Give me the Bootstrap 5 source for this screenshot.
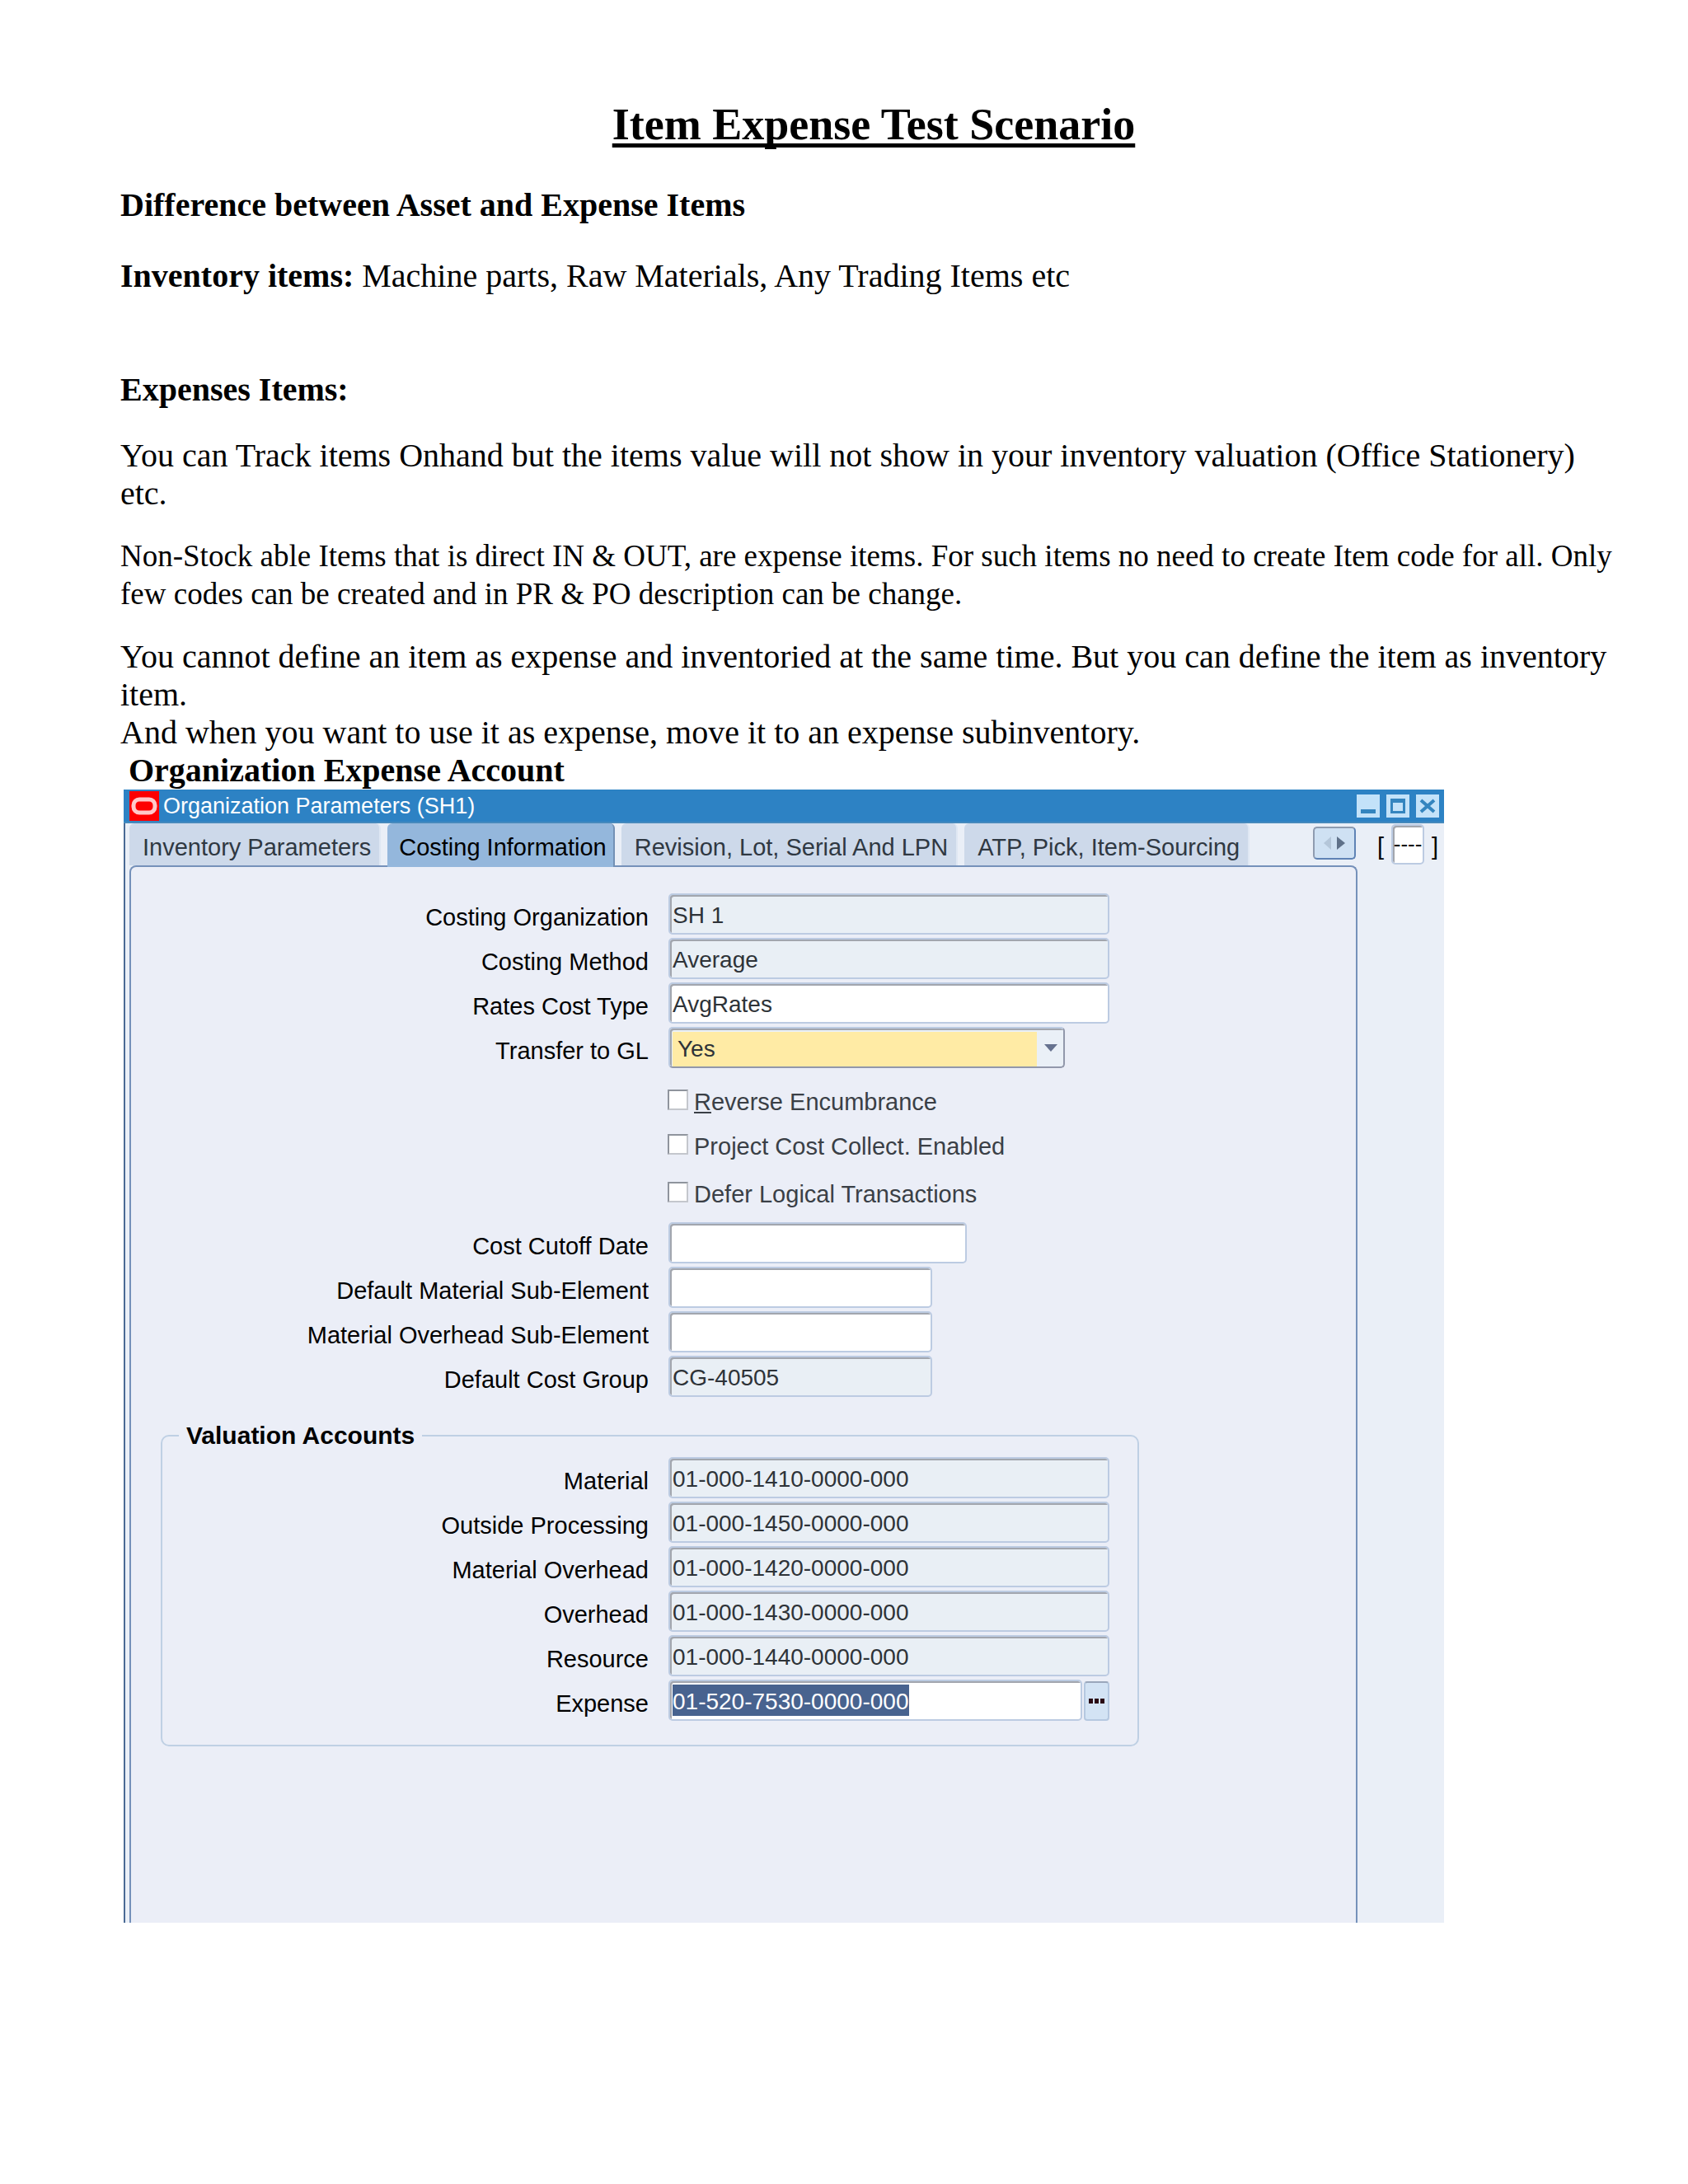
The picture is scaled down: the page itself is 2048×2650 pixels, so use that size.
<!DOCTYPE html>
<html lang="en">
<head>
<meta charset="utf-8">
<meta name="viewport" content="width=device-width, initial-scale=1">
<title>Item Expense Test Scenario</title>
<link href="https://cdn.jsdelivr.net/npm/bootstrap@5.3.0/dist/css/bootstrap.min.css" rel="stylesheet">
<style>
  body { background: #fff; color: #000; }
  .doc { font-family: "Liberation Serif", "Times New Roman", serif; font-size: 40px; line-height: 46px; padding: 121px 74px 120px 146px; }
  .doc p, .doc h2, .doc h3 { font-size: 40px; line-height: 46px; margin: 0; }
  .doc h2, .doc h3 { font-weight: 700; }
  .doc h1 { font-size: 54px; line-height: 60px; font-weight: 700; margin: 0 0 45px; text-decoration: underline; text-decoration-thickness: 5px; text-underline-offset: 5px; text-decoration-skip-ink: none; }
  .doc p.compact { font-size: 37px; }
  .doc h2.sub { margin-bottom: 40px; }
  .doc .gap-lg { margin-bottom: 92px; }
  .doc .gap-md { margin-bottom: 34px; }
  .doc .gap-sm { margin-bottom: 30px; }
  .doc h3.caption { padding-left: 10px; }

  .appwin { max-width: 1602px; margin-left: 4px; background: #eaeff7; font-family: "Liberation Sans", Arial, sans-serif; font-size: 29px; line-height: 34px; border-left: 2px solid #4a6a94; }
  .titlebar { background: #2d82c4; height: 41px; padding: 0 6px 0 7px; margin-left: -2px; border-bottom: 2px solid #4589bd; color: #fff; font-size: 27px; gap: 5px; }
  .titlebar .logo { width: 36px; height: 36px; flex: none; }
  .winbtns { gap: 8px; }
  .winbtns button { width: 28px; height: 28px; padding: 0; border: 0; background: none; display: block; }
  .winbtns svg { display: block; }
  .left-col { width: 1495px; min-width: 0; padding-left: 5px; }
  .tabstrip { height: 51px; gap: 8px; padding-right: 2px; }
  .tabstrip .tab { border: 0; border-radius: 6px 6px 0 0; height: 51px; padding: 6px 10px 0 16px; background: #cdd9ea; color: #2f3842; white-space: nowrap; border-right: 2px solid #dfe7f3; }
  .tabstrip .tab.active { background: #94b7dc; color: #000; border-right: 2px solid #7391b5; height: 53px; padding: 4px 8px 0 14px; }
  .scroller { width: 52px; height: 40px; margin-top: 4px; border: 2px solid #8f9cb0; border-right-color: #5f83b5; border-bottom-color: #5f83b5; border-radius: 5px; background: #cfe1f3; padding: 0; }
  .panel { border: 2px solid #7591ba; border-bottom: 0; border-radius: 8px 8px 0 0; background: #ebeef7; padding: 32px 0 214px; --lab: 628px; }
  .frow { display: flex; gap: 24px; height: 50px; margin-bottom: 4px; }
  .frow > label { width: var(--lab); text-align: right; padding-top: 12px; white-space: nowrap; color: #000; }
  .fld { height: 50px; border: 2px solid #bccbe2; border-radius: 5px; background: #fff; box-shadow: inset 2px 2px 0 #a2a6ae; padding: 4px 3px 0 3px; font-size: 28px; color: #2e3338; outline: 0; min-width: 0; }
  .fld[readonly] { background: #e9eff5; }
  .w-full { width: 535px; }
  .w-date { width: 362px; }
  .w-mid { width: 320px; }
  .pick { position: relative; width: 481px; }
  .pick select { appearance: none; width: 100%; padding-left: 9px; border-right-color: #9298ab; border-bottom-color: #9298ab; background: linear-gradient(#ffeba5, #ffeba5) 3px 4px / 442px 42px no-repeat #eaf0f7; }
  .pick svg { position: absolute; right: 8px; top: 20px; pointer-events: none; }
  .checks { padding: 7px 0 10px; }
  .chk { display: flex; align-items: center; gap: 7px; height: 54px; margin-left: 651px; color: #3a3f46; font-size: 29px; }
  .chk input { appearance: none; width: 25px; height: 25px; margin: 0; background: #fff; border: 2px solid #8f949d; border-right-color: #c4c7cd; border-bottom-color: #c4c7cd; flex: none; }
  .chk label { padding-top: 6px; }
  .chk.last { margin-top: 4px; }
  .valbox { --lab: 590px; border: 2px solid #bfd0e4; border-radius: 10px; max-width: 1187px; margin: 30px 0 0 36px; padding: 9px 0 25px; }
  .valbox legend { float: none; width: auto; margin: 0 0 0 20px; padding: 0 9px; font-size: 30px; line-height: 34px; font-weight: 700; color: #000; }
  .picker { gap: 2px; }
  .picker .fld { width: 502px; }
  .fld.selected { color: #fff; background: linear-gradient(#48638f, #48638f) 3px 4px / 287px 38px no-repeat #fff; }
  .lov { width: 31px; height: 48px; margin-top: 2px; border: 2px solid #b5c8e0; border-top-color: #9aa7bb; border-radius: 4px; background: #d3e3f4; padding: 0; display: flex; align-items: center; justify-content: center; }
  .flex-box { padding: 1px 0 0 24px; color: #000; font-size: 29px; }
  .flex-box .fld { width: 40px; height: 49px; padding: 0; text-align: center; margin: 0 9px; color: #000; font-size: 26px; }
  .flex-box span { padding-top: 4px; }
</style>
<script src="https://cdn.jsdelivr.net/npm/bootstrap@5.3.0/dist/js/bootstrap.bundle.min.js"></script>
</head>
<body>
<main class="doc container-fluid">
  <h1 class="text-center">Item Expense Test Scenario</h1>
  <h2 class="sub">Difference between Asset and Expense Items</h2>
  <p class="gap-lg"><strong>Inventory items:</strong> Machine parts, Raw Materials, Any Trading Items etc</p>
  <h2 class="gap-md">Expenses Items:</h2>
  <p class="gap-sm">You can Track items Onhand but the items value will not show in your inventory valuation (Office Stationery)<br>etc.</p>
  <p class="compact gap-sm">Non-Stock able Items that is direct IN &amp; OUT, are expense items. For such items no need to create Item code for all. Only<br>few codes can be created and in PR &amp; PO description can be change.</p>
  <p>You cannot define an item as expense and inventoried at the same time. But you can define the item as inventory<br>item.</p>
  <p>And when you want to use it as expense, move it to an expense subinventory.</p>
  <h3 class="caption">Organization Expense Account</h3>

  <section class="appwin">
    <div class="titlebar d-flex align-items-center">
      <svg class="logo" viewBox="0 0 36 36" aria-hidden="true"><rect width="36" height="36" fill="#fe0000"/><rect x="5" y="10" width="26" height="16" rx="7" fill="none" stroke="#ffc9c9" stroke-width="5"/></svg>
      <span>Organization Parameters (SH1)</span>
      <div class="winbtns d-flex ms-auto">
        <button type="button" aria-label="Minimize"><svg width="28" height="28"><rect width="28" height="28" fill="#c3e2f9"/><rect x="5" y="18" width="18" height="5" fill="#3485bf"/></svg></button>
        <button type="button" aria-label="Maximize"><svg width="28" height="28"><rect width="28" height="28" fill="#c3e2f9"/><path d="M5 5h18v18H5zM8 10v10h12V10z" fill="#3485bf" fill-rule="evenodd"/></svg></button>
        <button type="button" aria-label="Close"><svg width="28" height="28"><rect width="28" height="28" fill="#c3e2f9"/><path d="M6 7l16 14M22 7L6 21" stroke="#3485bf" stroke-width="4"/></svg></button>
      </div>
    </div>
    <div class="d-flex align-items-start">
      <div class="left-col">
        <div class="tabstrip d-flex align-items-start" role="tablist">
          <button type="button" class="tab" role="tab">Inventory Parameters</button>
          <button type="button" class="tab active" role="tab" aria-selected="true">Costing Information</button>
          <button type="button" class="tab" role="tab">Revision, Lot, Serial And LPN</button>
          <button type="button" class="tab" role="tab">ATP, Pick, Item-Sourcing</button>
          <button type="button" class="scroller ms-auto" aria-label="Scroll tabs"><svg width="30" height="20" viewBox="0 0 30 20" class="d-block mx-auto"><path d="M11 2v16L2 10z" fill="#b4c6d9"/><path d="M18 2v16l10-8z" fill="#5f7189"/></svg></button>
        </div>
        <form class="panel">
          <div class="frow"><label for="org">Costing Organization</label><input id="org" class="fld w-full" value="SH 1" readonly></div>
          <div class="frow"><label for="method">Costing Method</label><input id="method" class="fld w-full" value="Average" readonly></div>
          <div class="frow"><label for="rates">Rates Cost Type</label><input id="rates" class="fld w-full" value="AvgRates"></div>
          <div class="frow"><label for="gl">Transfer to GL</label>
            <div class="pick"><select id="gl" class="fld"><option>Yes</option><option>No</option></select><svg width="18" height="11" aria-hidden="true"><path d="M1 1h16l-8 9z" fill="#66728f"/></svg></div>
          </div>
          <div class="checks">
            <div class="chk"><input type="checkbox" id="rev"><label for="rev"><u>R</u>everse Encumbrance</label></div>
            <div class="chk"><input type="checkbox" id="proj"><label for="proj">Project Cost Collect. Enabled</label></div>
            <div class="chk last"><input type="checkbox" id="defer"><label for="defer">Defer Lo<u>g</u>ical Transactions</label></div>
          </div>
          <div class="frow"><label for="cutoff">Cost Cutoff Date</label><input id="cutoff" class="fld w-date"></div>
          <div class="frow"><label for="dmse">Default Material Sub-Element</label><input id="dmse" class="fld w-mid"></div>
          <div class="frow"><label for="mose">Material Overhead Sub-Element</label><input id="mose" class="fld w-mid"></div>
          <div class="frow"><label for="dcg">Default Cost Group</label><input id="dcg" class="fld w-mid" value="CG-40505" readonly></div>
          <fieldset class="valbox">
            <legend>Valuation Accounts</legend>
            <div class="frow"><label for="a1">Material</label><input id="a1" class="fld w-full" value="01-000-1410-0000-000" readonly></div>
            <div class="frow"><label for="a2">Outside Processing</label><input id="a2" class="fld w-full" value="01-000-1450-0000-000" readonly></div>
            <div class="frow"><label for="a3">Material Overhead</label><input id="a3" class="fld w-full" value="01-000-1420-0000-000" readonly></div>
            <div class="frow"><label for="a4">Overhead</label><input id="a4" class="fld w-full" value="01-000-1430-0000-000" readonly></div>
            <div class="frow"><label for="a5">Resource</label><input id="a5" class="fld w-full" value="01-000-1440-0000-000" readonly></div>
            <div class="frow"><label for="a6">Expense</label>
              <div class="picker d-flex"><input id="a6" class="fld selected" value="01-520-7530-0000-000"><button type="button" class="lov" aria-label="List of values"><svg width="19" height="6"><path d="M0 0h5v6H0zM7 0h5v6H7zM14 0h5v6h-5z" fill="#2a0a14"/></svg></button></div>
            </div>
          </fieldset>
        </form>
      </div>
      <div class="flex-box d-flex align-items-center">
        <span>[</span><input class="fld" value="----" aria-label="Flexfield"><span>]</span>
      </div>
    </div>
  </section>
</main>
</body>
</html>
